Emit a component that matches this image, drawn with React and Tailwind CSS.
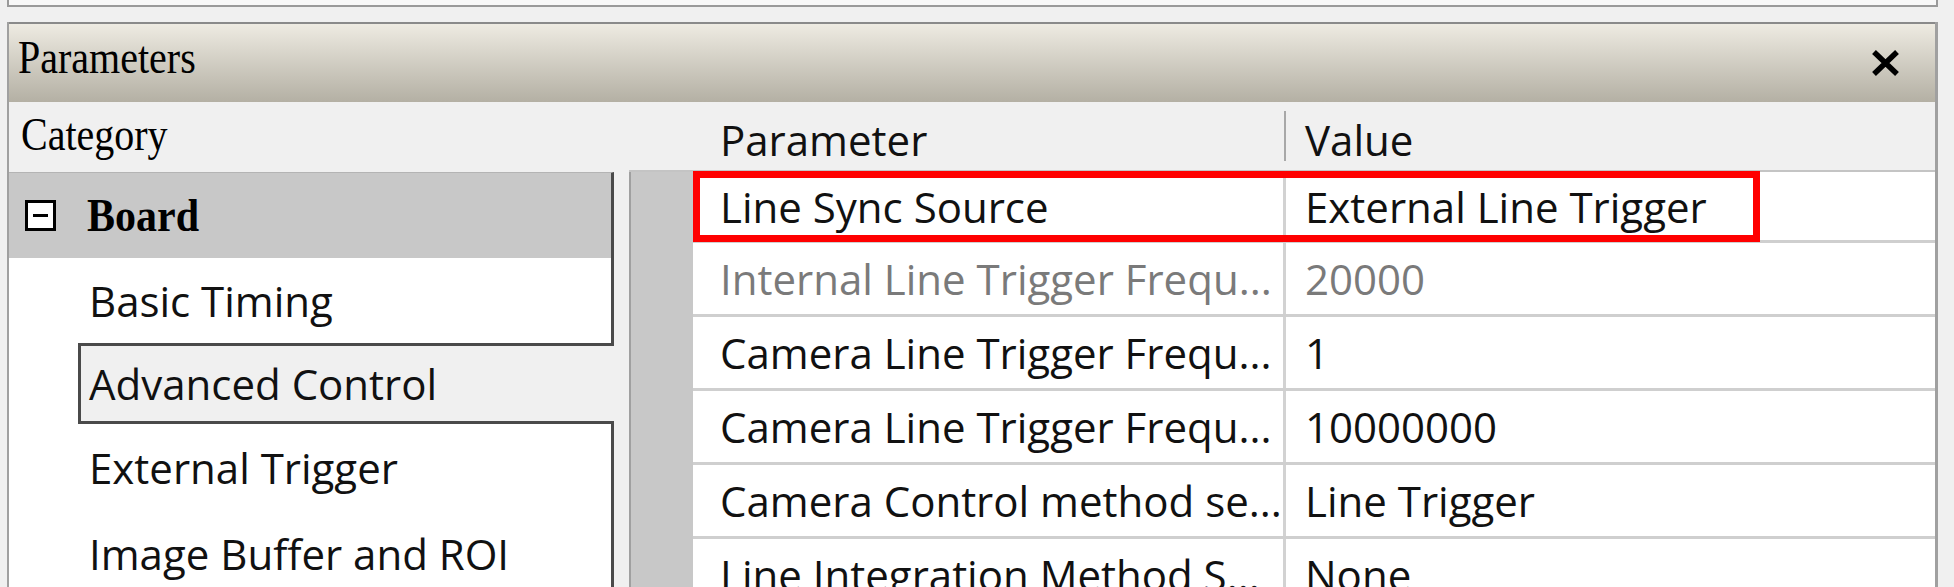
import React from "react";

const rows = [
  { p: "Line Sync Source", v: "External Line Trigger", h: "h-[71px]" },
  { p: "Internal Line Trigger Frequ...", v: "20000", dim: true, h: "h-[74px]" },
  { p: "Camera Line Trigger Frequ...", v: "1", h: "h-[74px]" },
  { p: "Camera Line Trigger Frequ...", v: "10000000", h: "h-[74px]" },
  { p: "Camera Control method se...", v: "Line Trigger", h: "h-[74px]" },
  { p: "Line Integration Method S...", v: "None", h: "h-[74px]" },
];

function MinusBox() {
  return (
    <svg width="31" height="31" viewBox="0 0 31 31" className="shrink-0">
      <rect x="1.5" y="1.5" width="28" height="28" fill="#ffffff" stroke="#000" strokeWidth="3" />
      <line x1="8" y1="15.5" x2="23" y2="15.5" stroke="#000" strokeWidth="3" />
    </svg>
  );
}

function CloseX() {
  return (
    <svg width="31" height="28" viewBox="0 0 31 28" className="shrink-0">
      <path d="M4 3 L27 25 M27 3 L4 25" stroke="#000" strokeWidth="5.5" fill="none" />
    </svg>
  );
}

export default function App() {
  return (
    <div className="w-[1954px] h-[587px] overflow-hidden bg-[#f0f0f0] font-['Open_Sans',sans-serif] text-[42px] leading-normal text-[#111]">
      {/* top box edge */}
      <div className="ml-[7px] w-[1931px] h-[7px] bg-[#f8f8f8] border-l-2 border-r-2 border-b-2 border-[#9a9a9a]" />
      <div className="h-[15px]" />

      {/* panel */}
      <div className="ml-[7px] w-[1931px] h-[565px] border-l-2 border-r-[3px] border-[#a0a0a0] flex flex-col">
        {/* title bar */}
        <div className="h-[80px] shrink-0 border-t-2 border-[#8a8a8a] bg-linear-to-b from-[#eeebe2] to-[#b4b0a4] flex items-center justify-between pl-[9px] pr-[34px]">
          <span className="inline-block mb-[10px] scale-y-[1.15] font-['Liberation_Serif',serif] text-[40px] text-black">
            Parameters
          </span>
          <CloseX />
        </div>

        {/* content */}
        <div className="flex-1 flex min-h-0">
          {/* left column */}
          <div className="w-[605px] shrink-0 flex flex-col">
            <div className="h-[70px] shrink-0 flex items-center pl-[12px]">
              <span className="inline-block mb-[5px] scale-y-[1.15] font-['Liberation_Serif',serif] text-[40px] text-black">
                Category
              </span>
            </div>
            <div className="flex-1 flex flex-col bg-white">
              <div className="h-[86px] shrink-0 bg-[#c8c8c8] border-t border-t-[#b4b4b4] border-r-[3px] border-r-[#4a4a4a] flex items-center pl-[16px]">
                <MinusBox />
                <span className="inline-block ml-[31px] scale-y-[1.12] font-['Liberation_Serif',serif] font-bold text-[42px] text-black">
                  Board
                </span>
              </div>
              <div className="h-[85px] shrink-0 border-r-[3px] border-[#4a4a4a] flex items-center pl-[80px]">
                <span>Basic Timing</span>
              </div>
              <div className="h-[81px] shrink-0 ml-[69px] bg-[#f0f0f0] border-t-[3px] border-l-[3px] border-b-[3px] border-[#4a4a4a] flex items-center pl-[8px]">
                <span>Advanced Control</span>
              </div>
              <div className="h-[86px] shrink-0 border-r-[3px] border-[#4a4a4a] flex items-center pl-[80px]">
                <span>External Trigger</span>
              </div>
              <div className="h-[86px] shrink-0 border-r-[3px] border-[#4a4a4a] flex items-center pl-[80px]">
                <span>Image Buffer and ROI</span>
              </div>
              <div className="flex-1 border-r-[3px] border-[#4a4a4a]" />
            </div>
          </div>

          {/* gap strip */}
          <div className="w-[15px] shrink-0" />

          {/* grid */}
          <div className="flex-1 flex flex-col min-w-0">
            <div className="h-[70px] shrink-0 border-b-2 border-[#c4c4c4] flex items-center">
              <div className="w-[64px] shrink-0" />
              <div className="w-[591px] shrink-0 pl-[27px] pt-[6px]">Parameter</div>
              <div className="w-[2px] h-[50px] shrink-0 bg-[#a8a8a8]" />
              <div className="flex-1 pl-[19px] pt-[6px]">Value</div>
            </div>
            <div className="relative flex-1 flex min-h-0">
              <div className="w-[64px] shrink-0 bg-[#c8c8c8] border-l-2 border-[#a0a0a0]" />
              <div className="flex-1 flex flex-col bg-white">
                {rows.map((r, i) => (
                  <div
                    key={i}
                    className={`${r.h} shrink-0 flex border-b-[3px] border-[#cfcfcf] ${r.dim ? "text-[#7a7a7a]" : "text-[#111]"}`}
                  >
                    <div className="w-[593px] shrink-0 border-r-[3px] border-[#d2d2d2] flex items-center pl-[27px] whitespace-nowrap overflow-hidden">
                      {r.p}
                    </div>
                    <div className="flex-1 flex items-center pl-[19px] whitespace-nowrap">{r.v}</div>
                  </div>
                ))}
              </div>
              {/* red annotation box */}
              <div className="absolute left-[64px] top-[-1px] w-[1067px] h-[71px] border-[7px] border-[#ff0000] pointer-events-none" />
            </div>
          </div>
        </div>
      </div>
    </div>
  );
}
